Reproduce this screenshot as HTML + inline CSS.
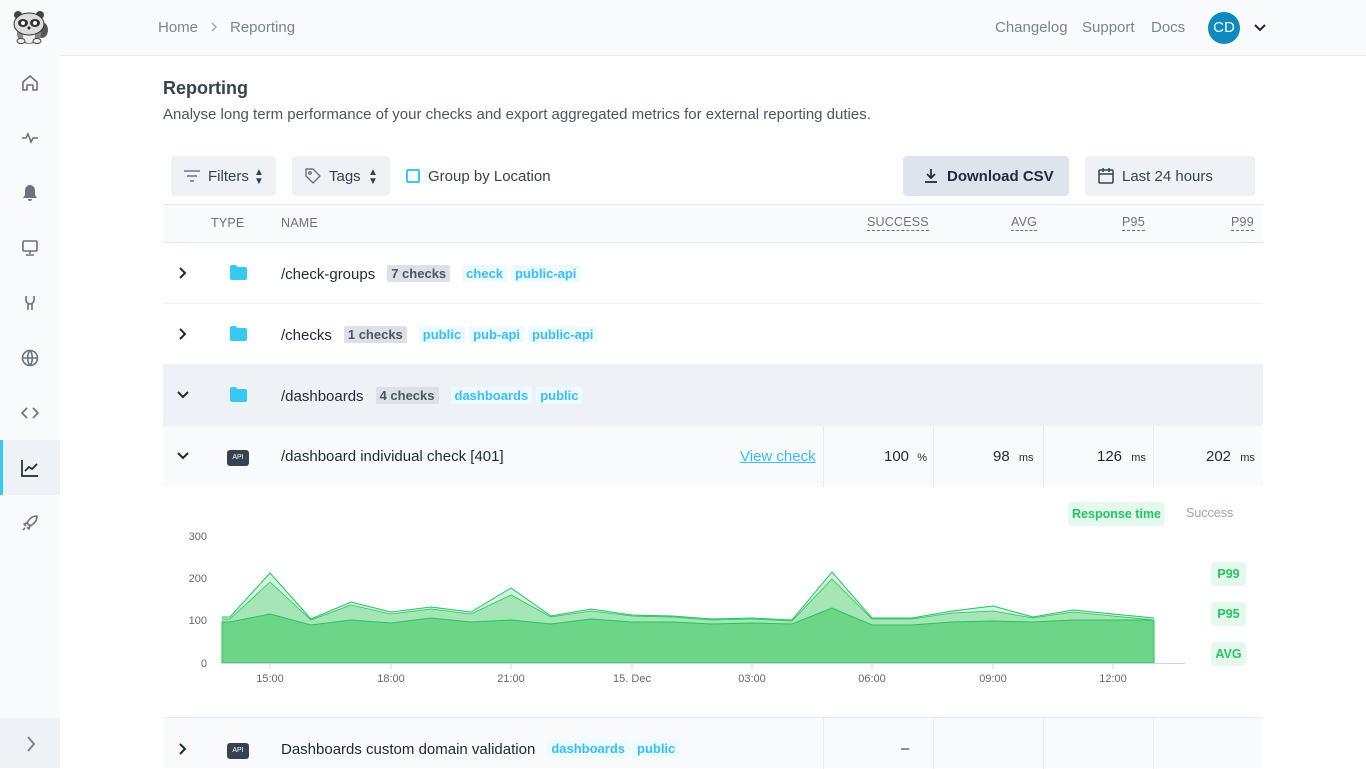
<!DOCTYPE html>
<html><head><meta charset="utf-8"><style>
*{box-sizing:border-box;margin:0;padding:0}
body{width:1366px;height:768px;overflow:hidden;background:#fff;font-family:"Liberation Sans",sans-serif;color:#1f2937;position:relative}
.abs{position:absolute}
.side{left:0;top:0;width:60px;height:768px;background:#f8fafc}
.top{left:60px;top:0;width:1306px;height:56px;background:#f8fafc;border-bottom:1px solid #e8edf3}
.ic{position:absolute;left:20px;width:20px;height:20px}
.t{position:absolute;white-space:nowrap}
.btn{position:absolute;background:#eef2f7;border-radius:4px;height:40px;top:156px;font-size:15px;color:#374151}
.badge{display:inline-block;background:#dde1e6;color:#4b5563;font-weight:bold;font-size:13px;padding:1px 4px;border-radius:2px;margin-left:12px;vertical-align:1px}
.tag{display:inline-block;background:#ecfbff;color:#38bdf8;font-weight:bold;font-size:13px;padding:1px 4px;border-radius:2px;margin-left:4px;vertical-align:1px}
.row{position:absolute;left:163px;width:1100px;border-bottom:1px solid #eef1f4}
.name{position:absolute;left:118px;font-size:15px;color:#1f2937;white-space:nowrap}
.fold{position:absolute;left:67px;width:17px;height:13px;background:#38c9f0;border-radius:2px}
.fold:before{content:"";position:absolute;left:0;top:-2px;width:7px;height:4px;background:#38c9f0;border-radius:2px 2px 0 0}
.api{position:absolute;left:64px;width:22px;height:16px;background:#374151;border-radius:3px;color:#fff;font-size:7px;text-align:center;line-height:16px}
.hd{font-size:12.5px;color:#6b7280;letter-spacing:.2px}
.dash{border-bottom:1px dashed #6b7280;padding-bottom:1px}
.pill{position:absolute;background:#e6f9ee;color:#22c55e;font-weight:bold;font-size:12.5px;border-radius:4px;text-align:center}
</style></head><body>
<div class="abs side"></div>
<div class="abs top"></div>
<svg class="abs" style="left:12px;top:10px" width="37" height="34" viewBox="0 0 37 34"><ellipse cx="30" cy="20" rx="6" ry="8" fill="#555"/><ellipse cx="17" cy="24" rx="12" ry="10" fill="#888"/><ellipse cx="17" cy="26" rx="6" ry="7" fill="#eee"/><circle cx="6" cy="5" r="4" fill="#444"/><circle cx="28" cy="5" r="4" fill="#444"/><ellipse cx="17" cy="14" rx="15" ry="11" fill="#ddd" stroke="#333"/><ellipse cx="11" cy="13" rx="5" ry="4" fill="#333"/><ellipse cx="23" cy="13" rx="5" ry="4" fill="#333"/><circle cx="11" cy="13" r="2" fill="#fff"/><circle cx="23" cy="13" r="2" fill="#fff"/><circle cx="17" cy="18" r="1.5" fill="#222"/><ellipse cx="9" cy="31" rx="4" ry="2.5" fill="#eee" stroke="#444"/><ellipse cx="25" cy="31" rx="4" ry="2.5" fill="#eee" stroke="#444"/></svg>
<svg class="ic" style="top:73px" viewBox="0 0 20 20" fill="none" stroke="#6b7280" stroke-width="1.6"><path d="M3 9l7-6 7 6v8h-4v-5h-6v5H3z" stroke-linejoin="round"/></svg>
<svg class="ic" style="top:128px" viewBox="0 0 20 20" fill="none" stroke="#6b7280" stroke-width="1.6"><path d="M2 10h4l2-4 3 8 2-4h5"/></svg>
<svg class="ic" style="top:183px" viewBox="0 0 20 20" fill="#6b7280"><path d="M10 2a5 5 0 0 0-5 5v5l-2 3h14l-2-3V7a5 5 0 0 0-5-5zM8 16a2 2 0 0 0 4 0z"/></svg>
<svg class="ic" style="top:238px" viewBox="0 0 20 20" fill="none" stroke="#6b7280" stroke-width="1.6"><rect x="3" y="3" width="14" height="10" rx="1"/><path d="M10 13v3M6 17h8"/></svg>
<svg class="ic" style="top:293px" viewBox="0 0 20 20" fill="none" stroke="#6b7280" stroke-width="1.6"><path d="M6 3v4a4 4 0 0 0 8 0V3M8 11v6M12 11v6"/></svg>
<svg class="ic" style="top:348px" viewBox="0 0 20 20" fill="none" stroke="#6b7280" stroke-width="1.6"><circle cx="10" cy="10" r="7.5"/><path d="M2.5 10h15M10 2.5c-3 3-3 12 0 15M10 2.5c3 3 3 12 0 15"/></svg>
<svg class="ic" style="top:403px" viewBox="0 0 20 20" fill="none" stroke="#6b7280" stroke-width="1.6"><path d="M7 5l-5 5 5 5M13 5l5 5-5 5"/></svg>
<div class="abs" style="left:0;top:440px;width:60px;height:55px;background:#eef2f7"></div>
<div class="abs" style="left:0;top:440px;width:3px;height:55px;background:#38c9f0"></div>
<svg class="ic" style="top:458px" viewBox="0 0 20 20" fill="none" stroke="#1f2937" stroke-width="1.7"><path d="M2 2v16h16M5 13l4-4 3 2 5-5"/></svg>
<svg class="ic" style="top:513px" viewBox="0 0 20 20" fill="none" stroke="#6b7280" stroke-width="1.6"><path d="M17 3c-5 0-8 3-10 7l3 3c4-2 7-5 7-10zM7 10l-3 1 2 2M10 13l-1 3-2-2M5 15l-2 2" stroke-linejoin="round"/></svg>
<div class="abs" style="left:0;top:718px;width:60px;height:50px;background:#eef2f7"></div>
<svg class="abs" style="left:24px;top:735px" width="14" height="18" viewBox="0 0 14 18" fill="none" stroke="#7b8494" stroke-width="2"><path d="M4 2l6 7-6 7"/></svg>
<div class="t" style="left:158px;top:19px;font-size:15px;color:#7b8494">Home</div>
<svg class="abs" style="left:209px;top:21px" width="10" height="12" viewBox="0 0 10 12" fill="none" stroke="#9ca3af" stroke-width="1.3"><path d="M3 2l4 4-4 4"/></svg>
<div class="t" style="left:230px;top:19px;font-size:15px;color:#7b8494">Reporting</div>
<div class="t" style="left:995px;top:19px;font-size:15px;color:#7b8494">Changelog</div>
<div class="t" style="left:1082px;top:19px;font-size:15px;color:#7b8494">Support</div>
<div class="t" style="left:1151px;top:19px;font-size:15px;color:#7b8494">Docs</div>
<div class="abs" style="left:1208px;top:12px;width:32px;height:32px;border-radius:50%;background:#0e8ac0;color:#fff;font-size:15px;text-align:center;line-height:32px">CD</div>
<svg class="abs" style="left:1254px;top:23px" width="12" height="10" viewBox="0 0 12 10" fill="none" stroke="#1f2937" stroke-width="2"><path d="M1 2l5 5 5-5"/></svg>
<div class="t" style="left:163px;top:78px;font-size:18px;font-weight:bold;color:#374151">Reporting</div>
<div class="t" style="left:163px;top:106px;font-size:15px;color:#4b5563">Analyse long term performance of your checks and export aggregated metrics for external reporting duties.</div>
<div class="btn" style="left:171px;width:105px"><svg class="abs" style="left:12px;top:12px" width="18" height="16" viewBox="0 0 18 16" fill="none" stroke="#6b7280" stroke-width="1.4"><path d="M1 3h16M4 8h10M7 13h4"/></svg><span class="t" style="left:37px;top:12px">Filters</span><span class="t" style="left:83px;top:12px;font-size:10px;line-height:9px;color:#374151">▲<br>▼</span></div>
<div class="btn" style="left:292px;width:98px"><svg class="abs" style="left:12px;top:11px" width="18" height="18" viewBox="0 0 18 18" fill="none" stroke="#6b7280" stroke-width="1.4"><path d="M2 2h7l7 7-7 7-7-7z" stroke-linejoin="round"/><circle cx="6" cy="6" r="1.2"/></svg><span class="t" style="left:37px;top:12px">Tags</span><span class="t" style="left:76px;top:12px;font-size:10px;line-height:9px">▲<br>▼</span></div>
<div class="abs" style="left:406px;top:169px;width:14px;height:14px;border:2px solid #38c9f0;border-radius:2px"></div>
<div class="t" style="left:428px;top:168px;font-size:15px;color:#374151">Group by Location</div>
<div class="btn" style="left:903px;width:166px;background:#dde4ec"><svg class="abs" style="left:21px;top:12px" width="14" height="16" viewBox="0 0 14 16" fill="none" stroke="#1f2937" stroke-width="1.7"><path d="M7 1v9M3 6l4 4 4-4M1 14h12"/></svg><span class="t" style="left:44px;top:12px;font-weight:bold;color:#1f2937">Download CSV</span></div>
<div class="btn" style="left:1085px;width:170px"><svg class="abs" style="left:13px;top:11px" width="16" height="17" viewBox="0 0 16 17" fill="none" stroke="#374151" stroke-width="1.5"><rect x="1" y="3" width="14" height="13" rx="1"/><path d="M1 7h14M5 1v4M11 1v4"/></svg><span class="t" style="left:37px;top:12px">Last 24 hours</span></div>
<div class="abs" style="left:163px;top:204px;width:1100px;height:39px;background:#f8fafc;border-top:1px solid #e3e8ee;border-bottom:1px solid #e3e8ee"></div>
<div class="t hd" style="left:211px;top:216px">TYPE</div>
<div class="t hd" style="left:281px;top:216px">NAME</div>
<div class="t hd" style="left:867px;top:215px"><span class="dash">SUCCESS</span></div>
<div class="t hd" style="left:1011px;top:215px"><span class="dash">AVG</span></div>
<div class="t hd" style="left:1122px;top:215px"><span class="dash">P95</span></div>
<div class="t hd" style="left:1231px;top:215px"><span class="dash">P99</span></div>
<div class="row" style="top:243px;height:61px">
<svg class="abs" style="left:15px;top:23px" width="10" height="14" viewBox="0 0 10 14" fill="none" stroke="#1f2937" stroke-width="2"><path d="M2 2l5 5-5 5"/></svg>
<div class="fold" style="top:24px"></div>
<div class="name" style="top:22px">/check-groups<span class="badge">7 checks</span><span class="tag" style="margin-left:12px">check</span><span class="tag">public-api</span></div></div>
<div class="row" style="top:304px;height:61px">
<svg class="abs" style="left:15px;top:23px" width="10" height="14" viewBox="0 0 10 14" fill="none" stroke="#1f2937" stroke-width="2"><path d="M2 2l5 5-5 5"/></svg>
<div class="fold" style="top:24px"></div>
<div class="name" style="top:22px">/checks<span class="badge">1 checks</span><span class="tag" style="margin-left:12px">public</span><span class="tag">pub-api</span><span class="tag">public-api</span></div></div>
<div class="row" style="top:365px;height:61px;background:#eef1f5">
<svg class="abs" style="left:13px;top:25px" width="14" height="10" viewBox="0 0 14 10" fill="none" stroke="#1f2937" stroke-width="2"><path d="M2 2l5 5 5-5"/></svg>
<div class="fold" style="top:24px"></div>
<div class="name" style="top:22px">/dashboards<span class="badge">4 checks</span><span class="tag" style="margin-left:12px">dashboards</span><span class="tag">public</span></div></div>
<div class="row" style="top:426px;height:61px;background:#f8fafc;border:none">
<svg class="abs" style="left:13px;top:25px" width="14" height="10" viewBox="0 0 14 10" fill="none" stroke="#1f2937" stroke-width="2"><path d="M2 2l5 5 5-5"/></svg>
<div class="api" style="top:24px">API</div>
<div class="name" style="top:22px">/dashboard individual check [401]</div>
<div class="t" style="left:577px;top:22px;font-size:15px;color:#38bdf8;text-decoration:underline">View check</div>
<div class="abs" style="left:660px;top:0;width:1px;height:61px;background:#e8edf2"></div>
<div class="abs" style="left:770px;top:0;width:1px;height:61px;background:#e8edf2"></div>
<div class="abs" style="left:880px;top:0;width:1px;height:61px;background:#e8edf2"></div>
<div class="abs" style="left:990px;top:0;width:1px;height:61px;background:#e8edf2"></div>
<div class="t" style="left:721px;top:22px;font-size:15px">100 <span style="font-size:11px;margin-left:4px">%</span></div>
<div class="t" style="left:830px;top:22px;font-size:15px">98 <span style="font-size:11px;margin-left:5px">ms</span></div>
<div class="t" style="left:934px;top:22px;font-size:15px">126 <span style="font-size:11px;margin-left:5px">ms</span></div>
<div class="t" style="left:1043px;top:22px;font-size:15px">202 <span style="font-size:11px;margin-left:5px">ms</span></div>
</div>
<div class="pill" style="left:1068px;top:502px;width:97px;height:24px;line-height:24px">Response time</div>
<div class="t" style="left:1186px;top:506px;font-size:12.5px;color:#9ca3af">Success</div>
<div class="pill" style="left:1211px;top:562px;width:35px;height:24px;line-height:24px">P99</div>
<div class="pill" style="left:1211px;top:602px;width:35px;height:24px;line-height:24px">P95</div>
<div class="pill" style="left:1211px;top:642px;width:35px;height:24px;line-height:24px">AVG</div>
<svg class="abs" style="left:0;top:0" width="1366" height="768" font-family="Liberation Sans" font-size="11" fill="#666">
<text x="207" y="540" text-anchor="end">300</text><text x="207" y="582" text-anchor="end">200</text><text x="207" y="624" text-anchor="end">100</text><text x="207" y="667" text-anchor="end">0</text>
<polygon fill="#d3f4dd" points="222,617 230,617 270,573 311,619 351,602 391,612 431,607 471,612 511,588 551,616 591,609 632,615 672,616 712,619 752,618 792,620 832,572 872,618 912,618 952,611 993,606 1033,617 1073,610 1113,614 1154,618 1154,663 222,663"/>
<polygon fill="#a6e5b5" points="222,619 230,619 270,582 311,620 351,605 391,614 431,609 471,614 511,595 551,617 591,611 632,616 672,617 712,620 752,619 792,621 832,579 872,619 912,619 952,613 993,611 1033,618 1073,612 1113,616 1154,620 1154,663 222,663"/>
<polyline fill="none" stroke="#22c55e" points="222,617 230,617 270,573 311,619 351,602 391,612 431,607 471,612 511,588 551,616 591,609 632,615 672,616 712,619 752,618 792,620 832,572 872,618 912,618 952,611 993,606 1033,617 1073,610 1113,614 1154,618"/>
<polyline fill="none" stroke="#22c55e" stroke-width=".8" points="222,619 230,619 270,582 311,620 351,605 391,614 431,609 471,614 511,595 551,617 591,611 632,616 672,617 712,620 752,619 792,621 832,579 872,619 912,619 952,613 993,611 1033,618 1073,612 1113,616 1154,620"/>
<polygon fill="#6dd587" stroke="#22c55e" points="222,622 230,622 270,614 311,625 351,620 391,623 431,618 471,622 511,620 551,624 591,619 632,622 672,622 712,624 752,623 792,624 832,608 872,625 912,625 952,622 993,621 1033,622 1073,620 1113,620 1154,620 1154,663 222,663"/>
<line x1="222" y1="663.5" x2="1185" y2="663.5" stroke="#cfd6e4"/>
<g stroke="#cfd6e4"><line x1="270" y1="663" x2="270" y2="669"/><line x1="391" y1="663" x2="391" y2="669"/><line x1="511" y1="663" x2="511" y2="669"/><line x1="632" y1="663" x2="632" y2="669"/><line x1="752" y1="663" x2="752" y2="669"/><line x1="872" y1="663" x2="872" y2="669"/><line x1="993" y1="663" x2="993" y2="669"/><line x1="1113" y1="663" x2="1113" y2="669"/></g>
<g text-anchor="middle"><text x="270" y="682">15:00</text><text x="391" y="682">18:00</text><text x="511" y="682">21:00</text><text x="632" y="682">15. Dec</text><text x="752" y="682">03:00</text><text x="872" y="682">06:00</text><text x="993" y="682">09:00</text><text x="1113" y="682">12:00</text></g>
</svg>
<div class="abs" style="left:163px;top:717px;width:1100px;height:51px;background:#f8fafc;border-top:1px solid #e8edf2">
<svg class="abs" style="left:15px;top:24px" width="10" height="14" viewBox="0 0 10 14" fill="none" stroke="#1f2937" stroke-width="2"><path d="M2 2l5 5-5 5"/></svg>
<div class="api" style="top:25px">API</div>
<div class="name" style="top:22px">Dashboards custom domain validation<span class="tag" style="margin-left:12px">dashboards</span><span class="tag">public</span></div>
<div class="abs" style="left:660px;top:0;width:1px;height:51px;background:#e8edf2"></div>
<div class="abs" style="left:770px;top:0;width:1px;height:51px;background:#e8edf2"></div>
<div class="abs" style="left:880px;top:0;width:1px;height:51px;background:#e8edf2"></div>
<div class="abs" style="left:990px;top:0;width:1px;height:51px;background:#e8edf2"></div>
<div class="t" style="left:738px;top:22px;font-size:15px">–</div>
</div>
</body></html>
